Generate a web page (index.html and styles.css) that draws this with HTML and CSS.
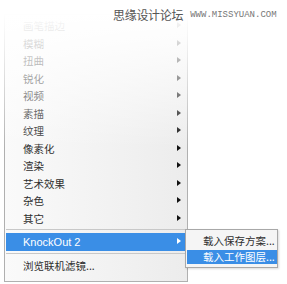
FILE: index.html
```html
<!DOCTYPE html>
<html lang="zh">
<head>
  <meta charset="UTF-8">
  <title>滤镜菜单</title>
  <link rel="stylesheet" href="styles.css">
</head>
<body>
<div class="page">
  <div class="mark">
    <span class="mark-cn">思缘设计论坛</span>
    <span class="mark-en">WWW.MISSYUAN.COM</span>
  </div>

  <div class="menu">
    <div class="item sub">画笔描边</div>
    <div class="item sub">模糊</div>
    <div class="item sub">扭曲</div>
    <div class="item sub">锐化</div>
    <div class="item sub">视频</div>
    <div class="item sub">素描</div>
    <div class="item sub">纹理</div>
    <div class="item sub">像素化</div>
    <div class="item sub">渲染</div>
    <div class="item sub">艺术效果</div>
    <div class="item sub">杂色</div>
    <div class="item sub">其它</div>
    <div class="sep"></div>
    <div class="item sub active latin">KnockOut 2</div>
    <div class="sep"></div>
    <div class="item">浏览联机滤镜...</div>
    <div class="fade"></div>
  </div>

  <div class="flyout">
    <div class="fly-item">载入保存方案...</div>
    <div class="fly-item active">载入工作图层...</div>
  </div>
</div>
</body>
</html>
```

FILE: styles.css
```css
body {
  margin: 0;
  background: #fff;
  font-family: "Noto Sans CJK SC", "Liberation Sans", sans-serif;
  font-size: 10.5px;
  color: #2e2e2e;
}

.page {
  position: relative;
  width: 287px;
  height: 284px;
  overflow: hidden;
}

.mark {
  position: absolute;
  top: 6px;
  left: 113px;
  display: flex;
  align-items: center;
  gap: 7px;
  z-index: 3;
}

.mark-cn {
  font-size: 12px;
  color: #555;
  letter-spacing: -0.3px;
}

.mark-en {
  font-family: "Liberation Mono", monospace;
  font-size: 9px;
  color: #777;
  padding-top: 1px;
}

.menu {
  position: relative;
  margin: 14px 0 0 4px;
  width: 181px;
  padding: 2px 0 6px 1px;
  border: 1px solid #b0b0b0;
  background: linear-gradient(to right, #fafafa, #ececec);
}

.item {
  position: relative;
  height: 17.5px;
  line-height: 17.5px;
  padding-left: 17px;
}

.item.sub::after {
  content: "";
  position: absolute;
  right: 6px;
  top: 5px;
  border-left: 4px solid #111;
  border-top: 3.5px solid transparent;
  border-bottom: 3.5px solid transparent;
}

.item.active {
  height: 18px;
  line-height: 18px;
  background: #3a8ee6;
  color: #fff;
  font-size: 11px;
}

.item.active::after {
  border-left-color: #fff;
}

.latin {
  font-family: "Liberation Sans", sans-serif;
}

.sep {
  height: 1px;
  margin: 2px 0 3px;
  background: #c8c8c8;
}

.fade {
  position: absolute;
  left: -2px;
  right: -2px;
  top: -2px;
  height: 135px;
  background: linear-gradient(to bottom, #fff 0%, rgba(255, 255, 255, 0.85) 20%, rgba(255, 255, 255, 0.45) 60%, rgba(255, 255, 255, 0) 100%);
  pointer-events: none;
}

.flyout {
  position: absolute;
  top: 229px;
  left: 185px;
  width: 90px;
  padding: 2px 0 3px 1px;
  border: 1px solid #a8a8a8;
  background: #f5f5f5;
  box-shadow: 1px 1px 2px rgba(0, 0, 0, 0.15);
  z-index: 2;
}

.fly-item {
  height: 18px;
  line-height: 18px;
  padding-left: 16px;
  white-space: nowrap;
}

.fly-item.active {
  height: 14px;
  line-height: 14px;
  background: #3a8ee6;
  color: #fff;
}
```
